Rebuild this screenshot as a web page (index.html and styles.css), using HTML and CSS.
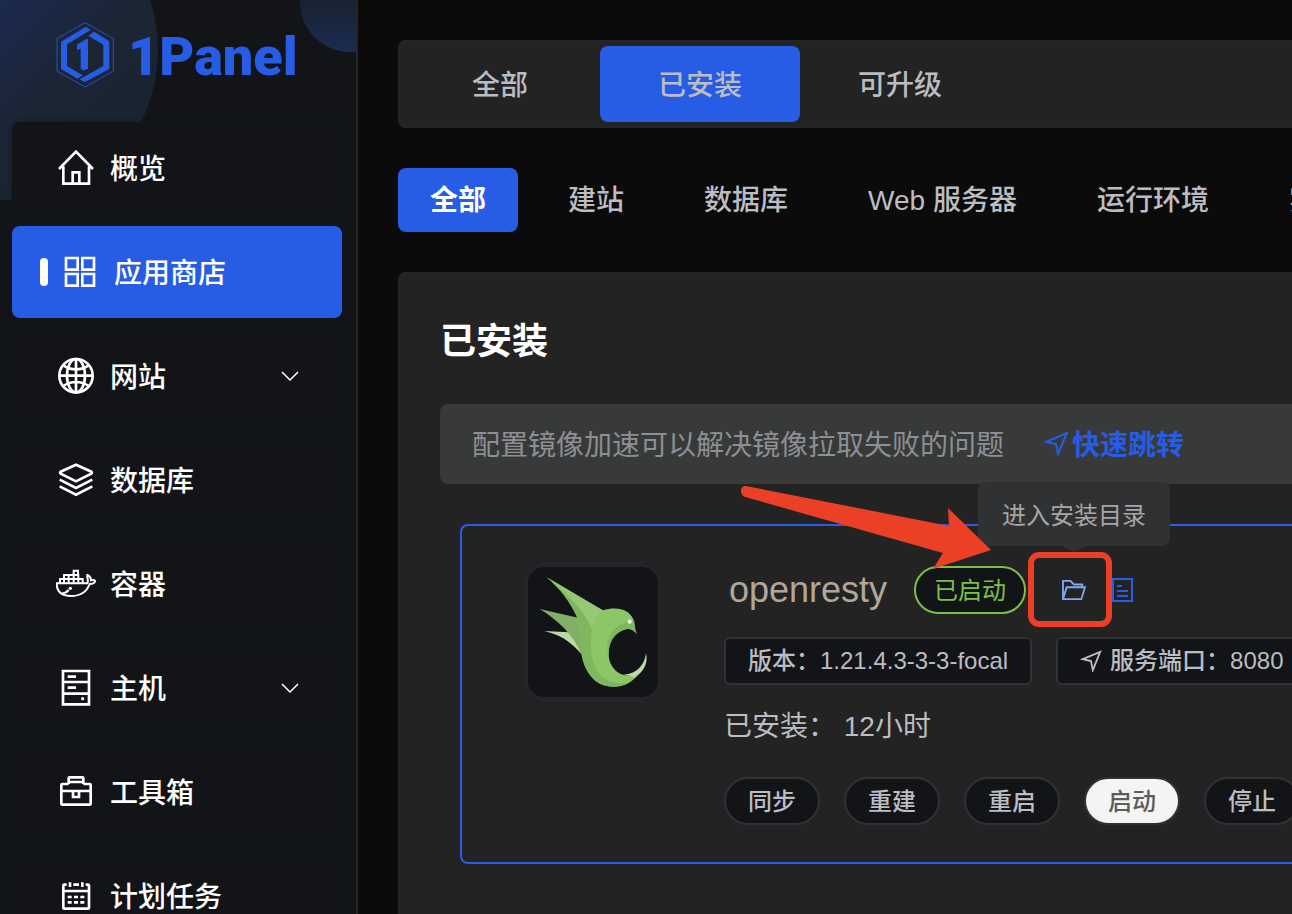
FILE: index.html
```html
<!DOCTYPE html>
<html lang="zh-CN">
<head>
  <meta charset="UTF-8" />
  <meta name="viewport" content="width=device-width, initial-scale=1.0"/>
  <title>1Panel - 应用商店</title>
  <link rel="stylesheet" href="styles.css">
</head>
<body>
  <aside class="sidebar">
    <svg class="sidebar-bg" viewBox="0 0 356 200" aria-hidden="true">
      <defs>
        <linearGradient id="big" x1="0" y1="0" x2="1" y2="1">
          <stop offset="0.35" stop-color="#1b2b58"/>
          <stop offset="0.65" stop-color="#1b2534"/>
          <stop offset="1" stop-color="#1a222b"/>
        </linearGradient>
        <linearGradient id="small" x1="0" y1="0" x2="0" y2="1">
          <stop offset="0.4" stop-color="#17202c"/>
          <stop offset="1" stop-color="#1b2c52"/>
        </linearGradient>
      </defs>
      <circle cx="-3" cy="50" r="161" fill="url(#big)"/>
      <circle cx="350" cy="2" r="50" fill="url(#small)"/>
    </svg>

    <a class="logo" href="#">
      <svg width="58" height="66" viewBox="169 66 174 198" fill="#275ce4" aria-hidden="true">
        <path d="M256 68 341 116V213L256 261 172 213V116Z" fill="none" stroke="#275ce4" stroke-width="2.5"/>
        <path d="M259 80 273 90 202 133V198L249 226 234 236 184 207V125Z"/>
        <path d="M283 95 329 124V207L255 247 240 238 311 198V134L266 107Z"/>
        <path d="M258 118H265V206L250 212 243 206V146L232 150V134Z"/>
      </svg>
      <span>1Panel</span>
    </a>

    <nav class="menu">
      <a class="menu-item" href="#">
        <svg class="menu-icon" viewBox="168 444 120 120" aria-hidden="true"><path d="M177 507 228 455 279 507M190 499V551H267V499M218 550V517H238V550"/></svg>
        <span>概览</span>
      </a>
      <a class="menu-item active" href="#">
        <svg class="menu-icon" viewBox="180 96 120 120" aria-hidden="true"><path d="M198 114H233V149H198ZM247 114H282V149H247ZM198 162H233V197H198ZM247 162H282V197H247Z"/></svg>
        <span>应用商店</span>
      </a>
      <a class="menu-item" href="#">
        <svg class="menu-icon" viewBox="168 408 120 120" aria-hidden="true"><circle cx="228" cy="467" r="50"/><ellipse cx="228" cy="467" rx="27" ry="50"/><path d="M228 416V518M177 467H279M190 436C212 452 244 452 266 436M190 498C212 482 244 482 266 498"/></svg>
        <span>网站</span>
        <svg class="chevron" viewBox="0 0 18 10" aria-hidden="true"><path d="M1 1 9 9 17 1"/></svg>
      </a>
      <a class="menu-item" href="#">
        <svg class="menu-icon" viewBox="168 60 120 120" aria-hidden="true"><path d="M228 74 274 95Q277 98 274 101L228 124 182 101Q179 98 182 95ZM179 119 228 144 277 119M179 139 228 164 277 139"/></svg>
        <span>数据库</span>
      </a>
      <a class="menu-item" href="#">
        <svg class="menu-icon docker" viewBox="168 372 120 120" aria-hidden="true"><path d="M170 430H262C267 424 260 413 262 405C267 407 273 413 273 421C278 419 283 420 286 423C284 429 276 433 269 432C260 456 239 468 213 468C183 468 170 453 170 430ZM181 460C192 461 201 456 206 450"/><path d="M180 429V417H248V429M192 429V405H235V429M206 405V429M221 429V392H234V405"/><circle class="dot" cx="211" cy="445" r="5"/></svg>
        <span>容器</span>
      </a>
      <a class="menu-item" href="#">
        <svg class="menu-icon" viewBox="168 24 120 120" aria-hidden="true"><path d="M189 33H267V133H189ZM189 66H267M189 101H267M203 50H228M203 83H228"/><circle class="dot" cx="248" cy="116" r="5"/></svg>
        <span>主机</span>
        <svg class="chevron" viewBox="0 0 18 10" aria-hidden="true"><path d="M1 1 9 9 17 1"/></svg>
      </a>
      <a class="menu-item" href="#">
        <svg class="menu-icon" viewBox="168 336 120 120" aria-hidden="true"><path d="M206 372H187Q184 372 184 375V431Q184 434 187 434H269Q272 434 272 431V375Q272 372 269 372H250M206 372V355Q206 352 209 352H247Q250 352 250 355V372M206 366H250M184 393H272M219 396V411H237V396"/></svg>
        <span>工具箱</span>
      </a>
      <a class="menu-item" href="#">
        <svg class="menu-icon" viewBox="168 648 120 120" aria-hidden="true"><path d="M200 674H193Q190 674 190 677V743Q190 746 193 746H264Q267 746 267 743V677Q267 674 264 674H257M220 674H237M190 693H267M210 667V681M247 667V681M203 711H215M222 711H234M241 711H253M203 727H215M222 727H234M241 727H253"/></svg>
        <span>计划任务</span>
      </a>
    </nav>
  </aside>

  <main class="main">
    <div class="tabs">
      <button class="tab">全部</button>
      <button class="tab active">已安装</button>
      <button class="tab">可升级</button>
    </div>

    <div class="tags">
      <button class="tag active">全部</button>
      <button class="tag">建站</button>
      <button class="tag">数据库</button>
      <button class="tag">Web 服务器</button>
      <button class="tag">运行环境</button>
      <button class="tag">实用工具</button>
    </div>

    <section class="panel">
      <h1>已安装</h1>
      <div class="notice">
        <span>配置镜像加速可以解决镜像拉取失败的问题</span>
        <a href="#">
          <svg width="24" height="24" viewBox="0 0 24 24" aria-hidden="true"><path d="M2 10 23 1 14 22 12 12Z"/></svg>
          <span>快速跳转</span>
        </a>
      </div>

      <div class="app-card">
        <div class="app-icon">
          <svg viewBox="54 51 390 390" role="img" aria-label="openresty">
            <path fill="#b9dca4" d="M103 243 178 247C196 262 206 285 214 312C182 273 146 253 103 243Z"/>
            <path fill="#80af65" d="M89 177 204 203 240 260 214 312C190 254 141 208 89 177Z"/>
            <path fill="#8bc766" d="M109 81 278 181C321 168 357 177 370 208C375 224 374 240 380 252C371 241 364 236 350 237C309 247 291 283 298 330C305 354 323 372 345 376C362 376 371 378 380 379C357 407 320 414 290 408C242 398 221 351 214 312L202 203C179 153 151 116 109 81Z"/>
            <path fill="#80b65e" d="M109 81C185 148 224 183 247 238C238 282 243 343 268 371C291 397 325 403 360 397C324 418 283 413 256 391C222 362 218 320 208 280L202 203C179 153 151 116 109 81Z"/>
            <path fill="#94ca75" d="M109 81 278 181C263 190 251 211 247 238C224 191 184 130 109 81Z"/>
            <path fill="#80b65e" d="M296 320C281 265 309 220 372 211C375 227 374 240 380 252C371 241 364 236 350 237C310 247 293 281 296 320Z"/>
            <path fill="#b9dca4" d="M341 374C379 373 404 345 408 310C416 340 399 367 374 383C362 375 351 376 341 374Z"/>
            <circle fill="#fff" cx="359" cy="215" r="6"/>
          </svg>
        </div>

        <div class="app-info">
          <div class="app-head">
            <span class="app-name">openresty</span>
            <span class="status">已启动</span>
            <div class="folder">
              <button class="icon-btn" aria-label="进入安装目录" aria-describedby="tip">
                <svg width="24" height="22" viewBox="0 0 26 24" aria-hidden="true"><path d="M1 22V2H9L13 6H22V9M1 22 5 9H25L21 22Z"/></svg>
              </button>
              <div class="tooltip" id="tip" role="tooltip">进入安装目录</div>
              <svg class="pointer" width="254" height="88" viewBox="0 0 254 88" aria-hidden="true"><path d="M9 4 212 44 211 26 254 68 196 87 206 71 8 15C2 13 3 3 9 4Z"/></svg>
            </div>
            <button class="icon-btn" aria-label="日志">
              <svg width="22" height="26" viewBox="0 0 22 26" aria-hidden="true"><path d="M1 2H20V24H1ZM5 9H10M5 14H16M5 19H16"/></svg>
            </button>
          </div>

          <div class="app-tags">
            <span class="app-tag">版本：1.21.4.3-3-3-focal</span>
            <span class="app-tag"><svg width="22" height="22" viewBox="0 0 24 24" aria-hidden="true"><path d="M3 10 22 2 14 22 12 12Z"/></svg>服务端口：8080</span>
          </div>

          <p class="installed">已安装： 12小时</p>

          <div class="actions">
            <button>同步</button>
            <button>重建</button>
            <button>重启</button>
            <button disabled>启动</button>
            <button>停止</button>
          </div>
        </div>
      </div>
    </section>
  </main>
</body>
</html>
```

FILE: styles.css
```css
* {
  box-sizing: border-box;
}
body {
  margin: 0;
  display: flex;
  height: 100vh;
  overflow: hidden;
  background: #0b0b0b;
  color: #bbbdc2;
  font-family: "Liberation Sans", "Noto Sans CJK SC", sans-serif;
  font-size: 28px;
  line-height: 40px;
  white-space: nowrap;
}
button {
  font: inherit;
  color: inherit;
  padding: 0;
  border: none;
  background: none;
  cursor: pointer;
}
a {
  color: inherit;
  text-decoration: none;
}
svg {
  display: block;
  flex-shrink: 0;
}

/* sidebar */
.sidebar {
  position: relative;
  flex: 0 0 358px;
  border-right: 2px solid #242528;
  background: #121418;
  color: #fff;
}
.sidebar-bg {
  position: absolute;
  top: 0;
  left: 0;
  width: 100%;
}
.logo {
  position: relative;
  display: flex;
  align-items: center;
  gap: 14px;
  height: 122px;
  padding: 0 0 12px 56px;
  color: #275ce4;
}
.logo span {
  padding-top: 4px;
  font-family: Roboto, sans-serif;
  font-size: 54px;
  line-height: 66px;
  font-weight: 900;
}
.menu {
  position: relative;
  display: flex;
  flex-direction: column;
  gap: 12px;
  padding: 0 14px 0 12px;
}
.menu-item {
  display: flex;
  align-items: center;
  gap: 14px;
  height: 92px;
  padding: 0 43px 0 44px;
  border-radius: 8px;
  background: #121418;
  box-shadow: 0 0 5px #111a2a;
  font-weight: 500;
}
.menu-item span {
  padding-top: 4px;
}
.menu-item.active {
  padding-left: 28px;
  background: #275ce4;
}
.menu-item.active::before {
  content: "";
  width: 8px;
  height: 28px;
  margin-right: -2px;
  border-radius: 4px;
  background: #fff;
}
.menu-icon {
  width: 40px;
  height: 40px;
  fill: none;
  stroke: #fff;
  stroke-width: 8;
}
.menu-icon.docker {
  stroke-width: 6;
}
.menu-icon .dot {
  fill: #fff;
  stroke: none;
}
.chevron {
  width: 18px;
  height: 10px;
  margin-left: auto;
  fill: none;
  stroke: #fff;
  stroke-width: 1.5;
}

/* main */
.main {
  flex: 1;
  min-width: 0;
  display: flex;
  flex-direction: column;
  gap: 40px;
  padding: 40px 0 0 40px;
}
.tabs {
  display: flex;
  padding: 4px 0;
  border: 2px solid #252527;
  border-right: none;
  border-radius: 8px 0 0 8px;
  background: #232323;
}
.tab {
  width: 200px;
  height: 76px;
  padding-top: 4px;
  border-radius: 8px;
  font-weight: 500;
}
.tab.active {
  background: #275ce4;
}
.tags {
  display: flex;
  gap: 16px;
  overflow: hidden;
}
.tag {
  flex-shrink: 0;
  height: 64px;
  padding: 2px 32px 0;
  border-radius: 8px;
  font-weight: 500;
}
.tag.active {
  margin-right: 2px;
  background: #275ce4;
  color: #fff;
  font-weight: 700;
}
.panel {
  flex: 1;
  padding: 48px 0 0 40px;
  border: 2px solid #252527;
  border-width: 2px 0 0 2px;
  border-radius: 8px 0 0 0;
  background: #232323;
}
h1 {
  margin: 0;
  padding-top: 2px;
  color: #fff;
  font-size: 36px;
  line-height: 36px;
  font-weight: 700;
}
.notice {
  display: flex;
  align-items: center;
  gap: 40px;
  height: 80px;
  margin-top: 44px;
  padding-left: 32px;
  border-radius: 8px 0 0 8px;
  background: #383a39;
  color: #8d8f95;
}
.notice span {
  padding-top: 4px;
}
.notice a {
  display: flex;
  align-items: center;
  gap: 4px;
  color: #275ce4;
  font-weight: 700;
}
.notice path,
.app-tag path,
.icon-btn path {
  fill: none;
  stroke: currentColor;
  stroke-width: 2;
}

/* installed app */
.app-card {
  display: flex;
  gap: 66px;
  margin: 40px 0 0 20px;
  padding: 26px 0 37px 66px;
  border: 2px solid #275ce4;
  border-right: none;
  border-radius: 8px 0 0 8px;
}
.app-icon {
  flex: 0 0 130px;
  height: 130px;
  margin-top: 15px;
  border-radius: 16px;
  background: #121418;
  box-shadow: 0 0 4px 2px #25272d;
}
.app-info {
  flex: 1;
  min-width: 0;
}
.app-head {
  display: flex;
  align-items: center;
  height: 75px;
}
.app-name {
  padding-left: 5px;
  color: #b0a799;
  font-size: 36px;
}
.status {
  margin: 0 2px 0 27px;
  padding: 2px 18px 0;
  border: 2px solid #7bc148;
  border-radius: 24px;
  background: #121418;
  color: #7bc148;
  font-size: 24px;
  line-height: 42px;
}
.folder {
  position: relative;
  display: flex;
  align-items: center;
  justify-content: center;
  width: 84px;
  height: 75px;
  padding-left: 8px;
  border: 6px solid #ec4026;
  border-radius: 11px;
  color: #84a7f5;
}
.icon-btn {
  color: #275ce4;
}
.folder .icon-btn {
  color: #84a7f5;
}
.tooltip {
  position: absolute;
  right: -64px;
  bottom: 75px;
  padding: 14px 24px 10px;
  border-radius: 8px;
  background: #303133;
  color: #a6a6a6;
  font-size: 24px;
}
.tooltip::after {
  content: "";
  position: absolute;
  top: 100%;
  left: 50%;
  margin-left: -12px;
  border: 12px solid transparent;
  border-top: 6px solid #303133;
  border-bottom: none;
}
.pointer {
  position: absolute;
  right: 115px;
  top: -76px;
  fill: #ec4026;
}
.app-tags {
  display: flex;
  gap: 24px;
  margin-top: 10px;
}
.app-tag {
  display: flex;
  flex-shrink: 0;
  align-items: center;
  gap: 8px;
  padding: 0 22px;
  border: 2px solid #2f3236;
  border-radius: 6px;
  background: #121418;
  font-size: 24px;
  line-height: 44px;
  font-weight: 500;
}
.installed {
  margin: 22px 0 8px;
}
.actions {
  display: flex;
  gap: 24px;
  padding-top: 20px;
  border-top: 2px solid #222228;
}
.actions button {
  flex-shrink: 0;
  width: 96px;
  height: 48px;
  padding-top: 2px;
  border: 2px solid #2f3236;
  border-radius: 24px;
  background: #121418;
  font-size: 24px;
  line-height: 42px;
  font-weight: 500;
}
.actions button:disabled {
  background: #f4f4f4;
  color: #5c5c5c;
  cursor: default;
}
```
